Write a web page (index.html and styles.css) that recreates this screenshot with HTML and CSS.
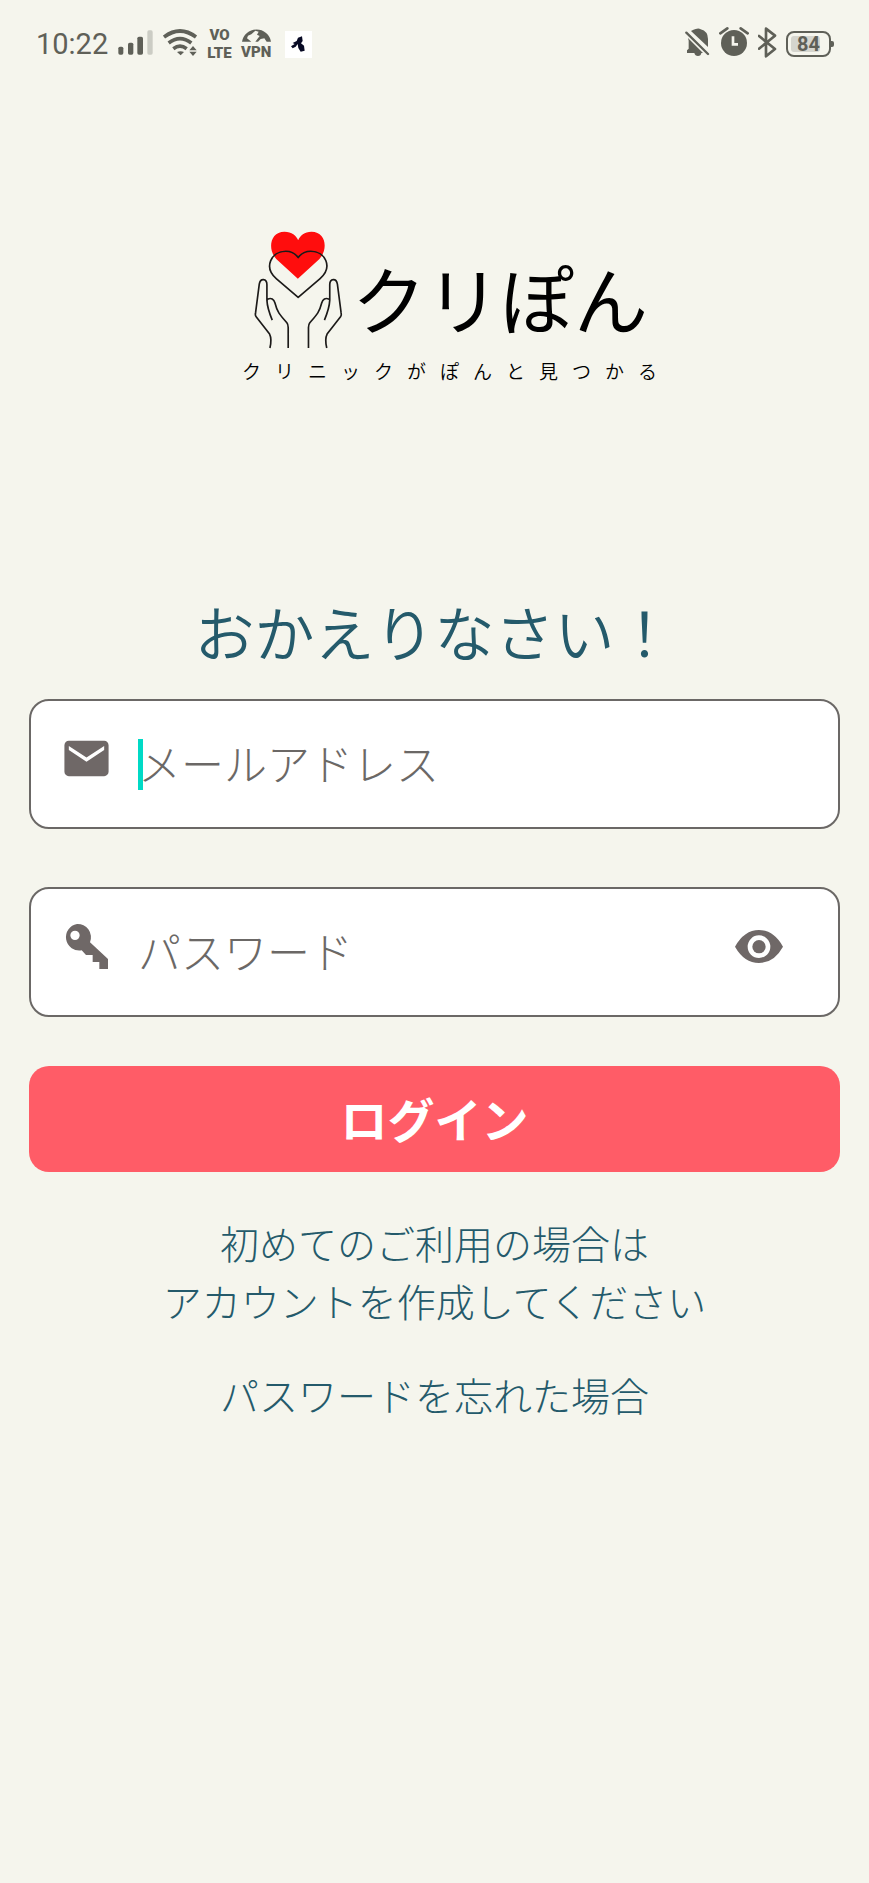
FILE: index.html
```html
<!DOCTYPE html>
<html lang="ja">
<head>
<meta charset="utf-8">
<meta name="viewport" content="width=device-width, initial-scale=1">
<title>クリぽん - ログイン</title>
<link rel="stylesheet" href="styles.css">
</head>
<body>
<header class="status">
  <div class="status-group">
    <span class="time">10:22</span>
    <svg class="glyph" width="37" height="40" viewBox="297 30 111 120" aria-hidden="true">
      <rect x="301" y="98" width="15" height="24" rx="5"/><rect x="330" y="86" width="16" height="36" rx="5"/><rect x="358" y="68" width="17" height="54" rx="5"/><rect x="388" y="49" width="16" height="73" rx="5" opacity=".28"/>
    </svg>
    <svg class="glyph" width="35" height="40" viewBox="432 30 105 120" aria-hidden="true">
      <g fill="none" stroke="currentColor" stroke-width="11"><path d="M435 69Q483 33 531 69"/><path d="M449 87Q483 61 517 87"/><path d="M463 104Q483 89 503 104"/></g>
      <path d="M474 114Q485 110 495 114L485 124ZM511 109L522 96L533 109ZM511 113H533L522 126Z"/>
    </svg>
    <span class="net"><span>VO</span><span>LTE</span></span>
    <span class="net">
      <svg class="glyph" width="31" height="16" viewBox="663 40 93 48" aria-hidden="true">
        <path fill-rule="evenodd" d="M666 84A44 43 0 0 1 753 84ZM681 74L694 84H706L719 67L711 63L716 54L706 51L694 62L684 66ZM714 84H740L733 74L722 76Z"/>
      </svg>
      <span>VPN</span>
    </span>
    <svg class="app" width="27" height="27" viewBox="792 45 81 81" aria-hidden="true">
      <path fill="#080a24" d="M831 65L843 61L845 75L840 82L849 89L851 104L839 107L832 96L830 84L824 92L815 97L810 91L821 84L815 81L827 75Z"/>
    </svg>
  </div>
  <div class="status-group">
    <svg class="glyph" width="25" height="40" viewBox="78 30 75 120" aria-hidden="true">
      <path d="M96 51Q104 46 110 45Q119 41 125 46Q147 52 147 75V99ZM87 72L132 117H127Q126 126 117 126Q108 126 106 117H84V109L89 104V80Z"/>
      <path d="M82 56L147 120" stroke="currentColor" stroke-width="7" stroke-linecap="round"/>
    </svg>
    <svg class="glyph" width="30" height="40" viewBox="180 30 90 120" aria-hidden="true">
      <circle cx="225" cy="87" r="39"/>
      <path d="M184 58L205 43M266 58L245 43" stroke="currentColor" stroke-width="8" stroke-linecap="round"/>
      <path d="M222 67V91H237" fill="none" stroke="#f5f5ed" stroke-width="8"/>
    </svg>
    <svg class="glyph" width="19" height="40" viewBox="297 30 57 120" aria-hidden="true">
      <path d="M300 66L348 105L321 127V44L348 65L300 104" fill="none" stroke="currentColor" stroke-width="8" stroke-linecap="round" stroke-linejoin="round"/>
    </svg>
    <span class="battery"><span class="charge">84</span></span>
  </div>
</header>

<main class="page">
  <div class="brand">
    <div class="brand-row">
      <svg class="hands" width="97" height="123" viewBox="60 40 290 370" aria-hidden="true">
        <path fill="#ff0d0d" d="M203 193L138 133C112 106 118 51 163 51C185 51 198 62 204 77C210 62 223 51 244 51C289 51 294 105 268 133Z"/>
        <g fill="none" stroke="#1c1a19" stroke-width="5" stroke-linejoin="round">
          <path d="M204 249L138 192C99 158 123 110 167 110Q191 110 204 129Q217 110 242 110C285 110 310 157 270 192Z"/>
          <path id="hand" d="M119 401C124 380 123 369 118 359L77 306Q74 302 76 294L87 209C90 190 110 191 110 211V257Q111 281 126 317M112 254C123 249 131 254 134 265C141 293 149 301 170 325Q174 330 174 339V401"/>
          <use href="#hand" transform="translate(409 0) scale(-1 1)"/>
        </g>
      </svg>
      <h1 class="name">クリぽん</h1>
    </div>
    <p class="tagline">クリニックがぽんと見つかる</p>
  </div>

  <h2 class="welcome">おかえりなさい！</h2>

  <form class="login">
    <label class="field">
      <svg class="icon" width="53" height="53" viewBox="0 0 24 24" aria-hidden="true"><path d="M20 4H4c-1.100 0-2 .9-2 2v12c0 1.100.9 2 2 2h16c1.100 0 2-.9 2-2V6c0-1.100-.9-2-2-2zm0 4.200-8 5.300-8-5.300V6.300l8 5.200 8-5.200z"/></svg>
      <span class="entry active"><input type="email" placeholder="メールアドレス" aria-label="メールアドレス"></span>
    </label>
    <div class="field">
      <svg class="icon" width="53" height="53" viewBox="121 120 159 159" aria-hidden="true"><path fill-rule="evenodd" d="M172 132A40 40 0 0 1 211 187L265 237V267H239V246H219V225H199L186 211A40 40 0 1 1 172 132ZM166 152A14 14 0 1 0 166 180A14 14 0 1 0 166 152Z"/></svg>
      <span class="entry"><input type="password" placeholder="パスワード" aria-label="パスワード"></span>
      <button class="reveal" type="button" aria-label="パスワードを表示">
        <svg class="icon" width="48" height="53" viewBox="162 150 144 159" aria-hidden="true"><path fill-rule="evenodd" d="M162 230Q190 180 234 180Q279 180 306 230Q279 279 234 279Q190 279 162 230ZM234 196A34 34 0 1 0 234 264A34 34 0 1 0 234 196Z"/><circle cx="234" cy="230" r="20"/></svg>
      </button>
    </div>
    <button class="submit" type="submit">ログイン</button>
  </form>

  <nav class="links">
    <a href="#signup">初めてのご利用の場合は<br>アカウントを作成してください</a>
    <a href="#reset">パスワードを忘れた場合</a>
  </nav>
</main>
</body>
</html>
```
FILE: styles.css
```css
* {
  box-sizing: border-box;
}

body {
  margin: 0;
  min-height: 100vh;
  background: #f5f5ed;
  color: #245a6b;
  font-family: "Noto Sans CJK JP", "Noto Sans", sans-serif;
}

.status {
  display: flex;
  justify-content: space-between;
  align-items: center;
  height: 88px;
  padding: 0 36px;
  color: #5f6058;
  font-family: Roboto, sans-serif;
}

.status-group {
  display: flex;
  align-items: center;
  gap: 9px;
}

.time {
  font-size: 29px;
  line-height: 40px;
}

.glyph {
  display: block;
  fill: currentColor;
}

.net {
  display: flex;
  flex-direction: column;
  align-items: center;
  font-size: 15px;
  font-weight: 900;
  line-height: 18px;
}

.app {
  margin-left: 4px;
  background: #fff;
}

.battery {
  position: relative;
  width: 45px;
  height: 26px;
  margin-right: 2px;
  padding: 3px;
  border: 2px solid currentColor;
  border-radius: 8px;
}

.battery::after {
  content: "";
  position: absolute;
  top: 8px;
  right: -5px;
  width: 3px;
  height: 6px;
  border-radius: 0 2px 2px 0;
  background: currentColor;
}

.charge {
  display: block;
  width: 29px;
  border-radius: 3px;
  background: #d5d5ce;
  font-size: 20px;
  font-weight: 700;
  line-height: 16px;
  text-align: right;
}

.page {
  display: flex;
  flex-direction: column;
  padding: 140px 29px;
}

.brand {
  align-self: center;
  margin-left: 44px;
  color: #000;
}

.brand-row {
  display: flex;
  align-items: center;
  gap: 5px;
  padding-left: 8px;
}

.name {
  margin: 15px 0 0;
  font-size: 74px;
  font-weight: 400;
  line-height: 80px;
}

.tagline {
  margin: 6px 0 0;
  font-size: 19px;
  font-weight: 350;
  line-height: 28px;
  letter-spacing: 14px;
}

.welcome {
  margin: 200px 0 22px;
  font-size: 60px;
  font-weight: 350;
  line-height: 92px;
  text-align: center;
}

.login {
  display: flex;
  flex-direction: column;
}

.field {
  display: flex;
  align-items: center;
  height: 130px;
  margin-bottom: 58px;
  padding: 0 55px 0 29px;
  border: 2px solid #6b6866;
  border-radius: 20px;
  background: #fff;
}

.icon {
  display: block;
  flex: none;
  margin-bottom: 12px;
  fill: #6f6867;
}

.entry {
  position: relative;
  flex: 1;
  margin-left: 25px;
}

.active::before {
  content: "";
  position: absolute;
  top: 5px;
  left: 0;
  width: 5px;
  height: 51px;
  background: #00dac6;
}

.entry input {
  display: block;
  width: 100%;
  height: 60px;
  padding: 0 0 4px;
  border: 0;
  outline: 0;
  background: transparent;
  color: #6b6866;
  font: 300 43px "Noto Sans CJK JP", sans-serif;
}

.entry input::placeholder {
  color: #6b6866;
  opacity: 1;
}

.reveal {
  padding: 0;
  border: 0;
  background: none;
}

.submit {
  height: 106px;
  margin-top: -9px;
  padding-bottom: 4px;
  border: 0;
  border-radius: 20px;
  background: #ff5c67;
  color: #fff;
  font: 700 47px "Noto Sans CJK JP", sans-serif;
}

.links {
  display: flex;
  flex-direction: column;
  align-items: center;
  gap: 36px;
  margin-top: 41px;
  font-size: 39px;
  font-weight: 300;
  line-height: 58px;
  text-align: center;
}

.links a {
  color: inherit;
  text-decoration: none;
}
```
